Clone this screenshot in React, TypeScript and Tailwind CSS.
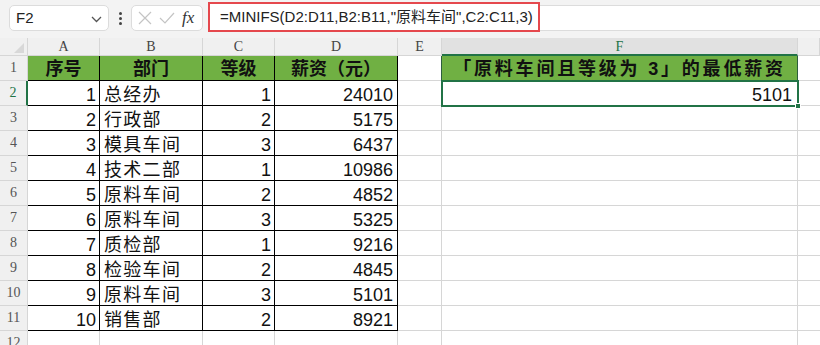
import React from "react";

const cjk = { fontFamily: '"Liberation Sans", "Noto Sans CJK SC", sans-serif' };
const serif = { fontFamily: '"Liberation Serif", "DejaVu Serif", serif' };

const data: [number, string, number, number][] = [
  [1, "总经办", 1, 24010],
  [2, "行政部", 2, 5175],
  [3, "模具车间", 3, 6437],
  [4, "技术二部", 1, 10986],
  [5, "原料车间", 2, 4852],
  [6, "原料车间", 3, 5325],
  [7, "质检部", 1, 9216],
  [8, "检验车间", 2, 4845],
  [9, "原料车间", 3, 5101],
  [10, "销售部", 2, 8921],
];

function RowHead({ n, active }: { n: number; active?: boolean }) {
  return (
    <div
      className={`h-[25px] flex items-end justify-center pb-[2px] text-[14px] bg-[#f0f0f0] border-b border-[#d6d6d6] ${
        active ? "border-r-2 border-r-[#217346] text-[#217346]" : "border-r border-r-[#d6d6d6] text-[#555]"
      }`}
      style={serif}
    >
      {n}
    </div>
  );
}

function Cell({
  children,
  className = "",
}: {
  children?: React.ReactNode;
  className?: string;
}) {
  return (
    <div className={`h-[25px] flex items-end pb-[1px] leading-none text-[18px] text-[#111] ${className}`} style={cjk}>
      {children}
    </div>
  );
}

export default function App() {
  const colHead = ["A", "B", "C", "D", "E", "F", ""];
  return (
    <div className="w-[820px] h-[345px] overflow-hidden bg-white relative select-none">
      {/* toolbar */}
      <div className="h-[38px] bg-[#f3f3f3] flex items-start pt-[5px] pl-[9px]">
        <div className="w-[100px] h-[26px] bg-white border border-[#dcdcdc] rounded-[5px] flex items-center pl-[6px] pr-[6px] justify-between">
          <span className="text-[15px] text-[#222]" style={cjk}>F2</span>
          <svg width="11" height="7" viewBox="0 0 11 7" className="mt-[2px]">
            <path d="M1 1 L5.5 5.5 L10 1" fill="none" stroke="#555" strokeWidth="1.3" />
          </svg>
        </div>
        <div className="w-[22px] h-[26px] flex flex-col items-center justify-center gap-[2px]">
          <div className="w-[3px] h-[3px] rounded-full bg-[#444]" />
          <div className="w-[3px] h-[3px] rounded-full bg-[#444]" />
          <div className="w-[3px] h-[3px] rounded-full bg-[#444]" />
        </div>
        <div className="w-[72px] h-[26px] bg-white border border-[#dcdcdc] rounded-[5px] flex items-center pl-[6px] gap-[7px]">
          <svg width="14" height="14" viewBox="0 0 14 14">
            <path d="M1 1 L13 13 M13 1 L1 13" stroke="#c4c4c4" strokeWidth="1.2" />
          </svg>
          <svg width="16" height="12" viewBox="0 0 16 12">
            <path d="M1 6 L6 11 L15 1" fill="none" stroke="#c4c4c4" strokeWidth="1.2" />
          </svg>
          <span className="text-[17px] italic text-[#333] leading-none -mt-[2px]" style={serif}>fx</span>
        </div>
        <div className="ml-[5px] -mt-[3px] w-[332px] h-[30px] bg-white border-2 border-[#e5484d] flex items-center pl-[10px]">
          <span className="text-[15px] text-[#222] whitespace-nowrap" style={cjk}>
            =MINIFS(D2:D11,B2:B11,"原料车间",C2:C11,3)
          </span>
        </div>
        <div className="flex-1 h-[26px] bg-white border-y border-[#dcdcdc]" />
      </div>

      {/* sheet */}
      <div className="grid grid-cols-[28px_72px_103px_72px_123px_44px_356px_1fr]">
        {/* column headers */}
        <div className="h-[18px] bg-[#f0f0f0] border-r border-b border-[#d6d6d6] relative">
          <svg width="10" height="10" viewBox="0 0 10 10" className="absolute right-[3px] bottom-[2px]">
            <path d="M10 0 L10 10 L0 10 Z" fill="#d8d8d8" />
          </svg>
        </div>
        {colHead.map((c, i) => (
          <div
            key={i}
            className={`h-[18px] flex items-center justify-center text-[14px] border-r border-[#d6d6d6] ${
              c === "F"
                ? "bg-[#e1e1e1] text-[#217346] border-b-2 border-b-[#217346]"
                : "bg-[#f0f0f0] text-[#444] border-b border-b-[#d6d6d6]"
            }`}
            style={serif}
          >
            {c}
          </div>
        ))}

        {/* row 1 */}
        <RowHead n={1} />
        {["序号", "部门", "等级", "薪资（元）"].map((t) => (
          <Cell key={t} className="bg-[#70b043] border-r border-b border-black justify-center font-bold pb-[2px]">
            {t}
          </Cell>
        ))}
        <Cell className="border-r border-[#2d5e3e] border-b border-b-[#d6d6d6]" />
        <Cell className="bg-[#70b043] border-r border-b border-[#2d5e3e] justify-center font-bold pb-[2px] tracking-[2.8px]">
          「原料车间且等级为 3」的最低薪资
        </Cell>
        <Cell className="border-b border-[#d6d6d6]" />

        {data.map(([a, b, c, d], i) => (
          <React.Fragment key={i}>
            <RowHead n={i + 2} active={i === 0} />
            <Cell className="border-r border-b border-black justify-end pr-[3px]">{a}</Cell>
            <Cell className="border-r border-b border-black pl-[4px] tracking-[1.3px]">{b}</Cell>
            <Cell className="border-r border-b border-black justify-end pr-[3px]">{c}</Cell>
            <Cell className="border-r border-b border-black justify-end pr-[4px]">{d}</Cell>
            <Cell className="border-r border-b border-[#d6d6d6]" />
            <Cell className="border-r border-b border-[#d6d6d6] justify-end pr-[5px]">{i === 0 ? 5101 : ""}</Cell>
            <Cell className="border-b border-[#d6d6d6]" />
          </React.Fragment>
        ))}
        <RowHead n={12} />
        <Cell className="border-r border-b border-[#d6d6d6]" />
        <Cell className="border-r border-b border-[#d6d6d6]" />
        <Cell className="border-r border-b border-[#d6d6d6]" />
        <Cell className="border-r border-b border-[#d6d6d6]" />
        <Cell className="border-r border-b border-[#d6d6d6]" />
        <Cell className="border-r border-b border-[#d6d6d6]" />
        <Cell className="border-b border-[#d6d6d6]" />
      </div>

      {/* selection F2 */}
      <div className="absolute left-[441px] top-[80px] w-[358px] h-[27px] border-2 border-[#217346] pointer-events-none">
        <div className="absolute -right-[4px] -bottom-[4px] w-[6px] h-[6px] bg-[#217346] border border-white" />
      </div>
    </div>
  );
}
